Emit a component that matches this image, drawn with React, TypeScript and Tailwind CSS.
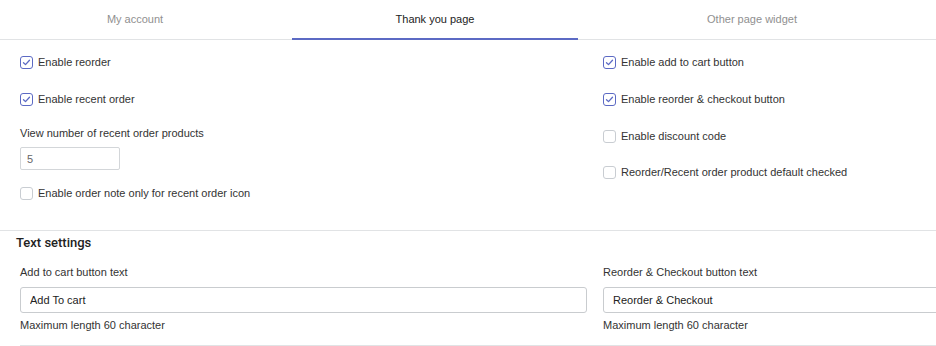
import React from "react";

const font = { fontFamily: '"Liberation Sans", Arial, sans-serif' };

const Checkbox = ({ checked, label }: { checked?: boolean; label: string }) => (
  <label className="flex items-center h-[14px] text-[11px] text-[#333]">
    <span
      className={`flex items-center justify-center w-[13px] h-[13px] rounded-[3px] border bg-white ${
        checked ? "border-[#5c6ac4]" : "border-[#c9cdd2]"
      }`}
    >
      {checked && (
        <svg width="9" height="9" viewBox="0 0 9 9" fill="none">
          <path
            d="M1.5 4.7 L3.5 6.6 L7.5 2.2"
            stroke="#5c6ac4"
            strokeWidth="1.3"
            strokeLinecap="round"
            strokeLinejoin="round"
          />
        </svg>
      )}
    </span>
    <span className="ml-[5px]">{label}</span>
  </label>
);

const TextField = ({ label, value }: { label: string; value: string }) => (
  <div className="flex flex-col">
    <div className="h-[14px] leading-[14px] text-[11px] text-[#333]">{label}</div>
    <input
      readOnly
      value={value}
      className="mt-[8px] h-[26px] w-full rounded-[3px] border border-[#c9cccf] bg-white px-[9px] text-[11px] text-[#222] outline-none"
    />
    <div className="mt-[5px] h-[14px] leading-[14px] text-[11px] text-[#333]">
      Maximum length 60 character
    </div>
  </div>
);

export default function App() {
  return (
    <div className="w-[936px] h-[346px] overflow-hidden bg-white" style={font}>
      <div className="w-[1190px]">
        {/* Tabs */}
        <div className="flex h-[40px] border-b border-[#e1e3e5] text-[11px]">
          <div className="w-[292px] pr-[22px] flex items-center justify-center text-[#909090]">
            My account
          </div>
          <div className="w-[286px] flex items-center justify-center text-[#222] border-b-2 border-[#5c6ac4] -mb-px">
            Thank you page
          </div>
          <div className="w-[348px] flex items-center justify-center text-[#909090]">
            Other page widget
          </div>
        </div>

        {/* Options */}
        <div className="grid grid-cols-[567px_567px] gap-x-[16px] px-[20px] pt-[15px] pb-[30px] border-b border-[#e1e3e5]">
          <div className="flex flex-col">
            <Checkbox checked label="Enable reorder" />
            <div className="mt-[23px]">
              <Checkbox checked label="Enable recent order" />
            </div>
            <div className="mt-[20px] h-[14px] leading-[14px] text-[11px] text-[#333]">
              View number of recent order products
            </div>
            <input
              readOnly
              value="5"
              className="mt-[7px] h-[23px] w-[100px] rounded-[2px] border border-[#d3d6d9] bg-white px-[6px] text-[11px] text-[#666] outline-none"
            />
            <div className="mt-[16px]">
              <Checkbox label="Enable order note only for recent order icon" />
            </div>
          </div>
          <div className="flex flex-col">
            <Checkbox checked label="Enable add to cart button" />
            <div className="mt-[23px]">
              <Checkbox checked label="Enable reorder & checkout button" />
            </div>
            <div className="mt-[23px]">
              <Checkbox label="Enable discount code" />
            </div>
            <div className="mt-[22px]">
              <Checkbox label="Reorder/Recent order product default checked" />
            </div>
          </div>
        </div>

        {/* Text settings */}
        <div className="pt-[4px]">
          <div
            className="px-[16px] h-[16px] leading-[16px] text-[13px] font-medium text-[#222]"
            style={{ fontFamily: "Roboto, Arial, sans-serif" }}
          >
            Text settings
          </div>
          <div className="mx-[20px] mt-[14px] grid grid-cols-[567px_567px] gap-x-[16px] pb-[13px] border-b border-[#e1e3e5]">
            <TextField label="Add to cart button text" value="Add To cart" />
            <TextField label="Reorder & Checkout button text" value="Reorder & Checkout" />
          </div>
        </div>
      </div>
    </div>
  );
}
